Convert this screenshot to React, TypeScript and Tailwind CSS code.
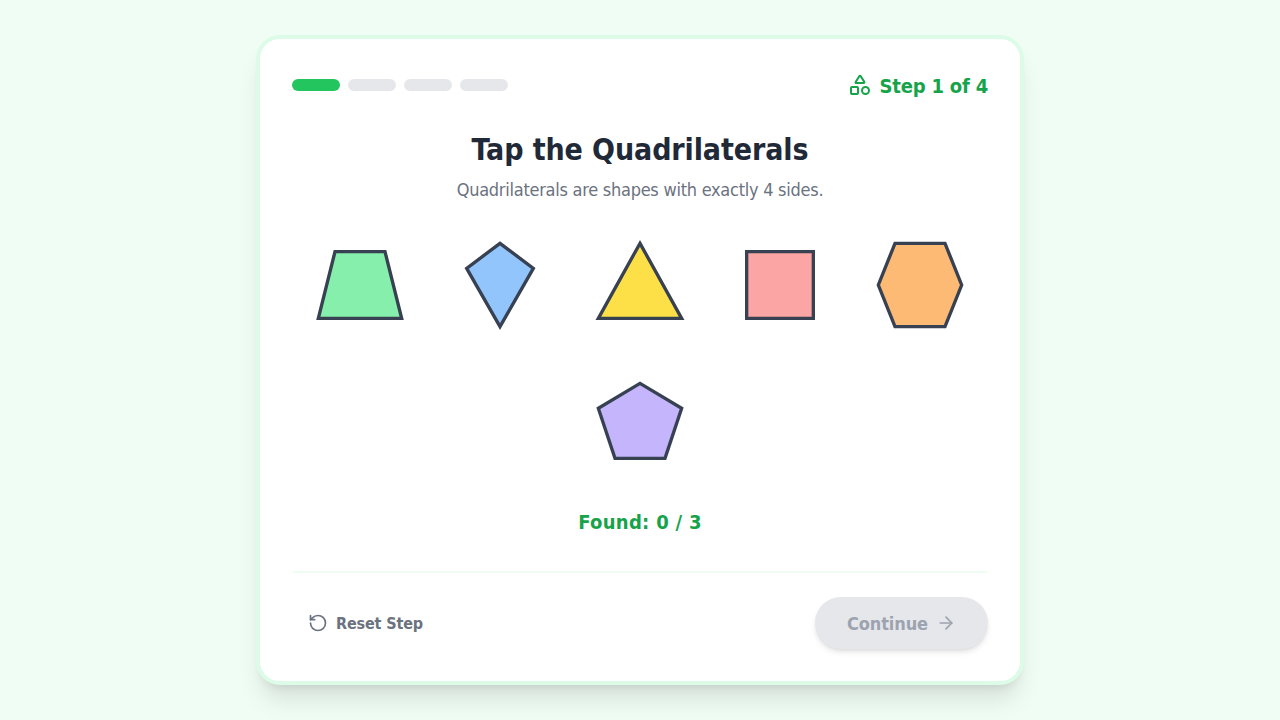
import { RotateCcw, ArrowRight, Shapes } from "lucide-react";

const shapes: { fill: string; points: string }[] = [
  { fill: "#86efac", points: "30,20 90,20 110,100 10,100" },
  { fill: "#93c5fd", points: "60,10 100,40 60,110 20,40" },
  { fill: "#fde047", points: "60,10 110,100 10,100" },
  { fill: "#fca5a5", points: "20,20 100,20 100,100 20,100" },
  { fill: "#fdba74", points: "30,10 90,10 110,60 90,110 30,110 10,60" },
  { fill: "#c4b5fd", points: "60,10 110,40 90,100 30,100 10,40" },
];

export default function App() {
  return (
    <div className="min-h-screen bg-[#f0fdf4] flex items-center justify-center font-['DejaVu_Sans_Condensed','DejaVu_Sans',sans-serif]">
      <div className="w-[768px] bg-white border-4 border-[#dcfce7] rounded-3xl p-8 shadow-xl">
        <div className="flex items-center justify-between h-7 mb-[33px]">
          <div className="flex gap-2">
            <div className="w-12 h-3 rounded-full bg-[#22c55e]" />
            <div className="w-12 h-3 rounded-full bg-[#e5e7eb]" />
            <div className="w-12 h-3 rounded-full bg-[#e5e7eb]" />
            <div className="w-12 h-3 rounded-full bg-[#e5e7eb]" />
          </div>
          <div className="flex items-center gap-2 text-xl font-bold text-[#16a34a]">
            <Shapes className="w-6 h-6" />
            <span className="mt-[2px] tracking-[-0.2px]">Step 1 of 4</span>
          </div>
        </div>
        <h1 className="text-3xl font-bold text-center text-[#1f2937] mb-2 tracking-[-0.1px]">Tap the Quadrilaterals</h1>
        <p className="text-lg text-center text-[#6b7280] mb-[21px] tracking-[-0.26px]">Quadrilaterals are shapes with exactly 4 sides.</p>
        <div className="flex flex-wrap justify-center gap-5">
          {shapes.map((s, i) => (
            <div key={i} className="w-[120px] h-[120px] flex items-center justify-center">
              <svg viewBox="0 0 120 120" className="w-[100px] h-[100px]">
                <polygon points={s.points} fill={s.fill} stroke="#374151" strokeWidth="4" />
              </svg>
            </div>
          ))}
        </div>
        <p className="mt-[23px] text-xl font-bold text-center text-[#16a34a] tracking-[0.3px]">Found: 0 / 3</p>
        <div className="mt-[35px] pt-6 border-t-2 border-[#f0fdf4] flex items-center justify-between">
          <button className="flex items-center gap-2 px-4 py-2 font-bold text-[#6b7280]">
            <RotateCcw className="w-5 h-5" />
            <span className="mt-[2px] tracking-[-0.15px]">Reset Step</span>
          </button>
          <button className="flex items-center gap-2 px-8 h-[52px] rounded-full text-lg font-bold bg-[#e5e7eb] text-[#9ca3af] shadow-md">
            <span className="mt-px tracking-[-0.1px]">Continue</span>
            <ArrowRight className="w-5 h-5" />
          </button>
        </div>
      </div>
    </div>
  );
}
